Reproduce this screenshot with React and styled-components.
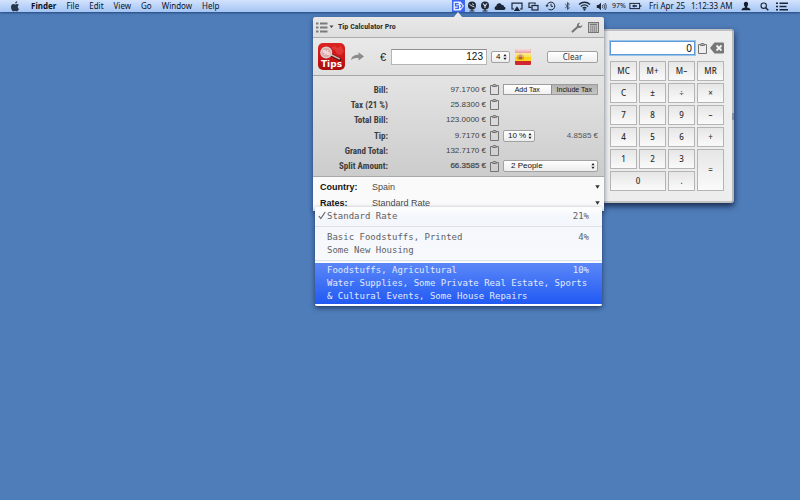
import React, { useState } from "react";
import styled, { createGlobalStyle, css } from "styled-components";

const sans = `"Liberation Sans", Arial, sans-serif`;
const narrow = `"Liberation Sans Narrow", "Roboto Condensed", "Liberation Sans", sans-serif`;
const system = `"Noto Sans", "Open Sans", sans-serif`;
const mono = `"DejaVu Sans Mono", monospace`;

const GlobalStyle = createGlobalStyle`
  *, *::before, *::after { box-sizing: border-box; }
  body { margin: 0; background: #4f7db9; }
  button, input, select { margin: 0; font: inherit; color: inherit; }
  svg { display: block; }
`;

const Desktop = styled.div`
  position: relative;
  min-height: 100vh;
  background: #4f7db9;
  font-family: ${sans};
  font-size: 9px;
  overflow: hidden;
`;

/* Menu bar */
const MenuBar = styled.header`
  display: flex;
  align-items: center;
  justify-content: space-between;
  height: 12px;
  padding: 0 9px;
  background: linear-gradient(#d3e3fc, #a4c5f4);
  box-shadow: 0 1px 2px #24477f;
  font-family: ${system};
  font-size: 8px;
  line-height: 12px;
  color: #0c131f;
`;

const Menus = styled.nav`
  display: flex;
  align-items: center;
  gap: 10px;
`;

const MenuButton = styled.button`
  padding: 0;
  border: 0;
  background: none;
  line-height: 12px;
  font-weight: ${(p) => (p.$strong ? 700 : 400)};
`;

const Tray = styled.div`
  display: grid;
  grid-template-columns: repeat(3, 13px) repeat(7, 17px) 18px 15px 48px 46px repeat(3, 18px);
  align-items: center;
`;

const TrayButton = styled.button`
  display: flex;
  align-items: center;
  justify-content: center;
  height: 12px;
  padding: 0;
  border: 0;
  background: ${(p) => (p.$active ? "#3d66ee" : "none")};
`;

const TrayText = styled.span`
  text-align: ${(p) => p.$align || "center"};
  font-size: ${(p) => (p.$small ? 7 : 8)}px;
  white-space: nowrap;
`;

/* Tip calculator window */
const TipWindow = styled.main`
  position: absolute;
  z-index: 2;
  left: 313px;
  top: 17px;
  width: 291px;
  border-radius: 3px 3px 0 0;
  background: #e5e5e5;
  box-shadow: 0 2px 5px rgba(10, 25, 60, 0.6);
`;

const Pointer = styled.svg`
  position: absolute;
  left: 139px;
  top: -5px;
`;

const TitleBar = styled.div`
  display: flex;
  align-items: center;
  height: 21px;
  padding: 0 5px 0 3px;
  border-bottom: 1px solid #acacac;
  border-radius: 3px 3px 0 0;
  background: linear-gradient(#e8e8e8, #dedede);
`;

const Title = styled.h1`
  flex: 1;
  margin: 0 0 0 4px;
  font: 700 8px/12px ${narrow};
  color: #333;
`;

const IconButton = styled.button`
  display: flex;
  padding: 0;
  border: 0;
  background: none;
  color: #777;
`;

const TitleTools = styled.div`
  display: flex;
  gap: 5px;
`;

const EntryBar = styled.form`
  display: flex;
  align-items: center;
  height: 38px;
  padding: 0 6px 0 5px;
  border-bottom: 1px solid #a5a5a5;
  background: linear-gradient(#e9e9e9, #dfdfdf);
`;

const ShareButton = styled(IconButton)`
  margin: 0 16px 0 6px;
`;

const Currency = styled.label`
  width: 11px;
  font-size: 11px;
  color: #222;
`;

const AmountInput = styled.input`
  flex: 1;
  min-width: 0;
  height: 16px;
  margin-right: 4px;
  padding: 0 3px;
  border: 1px solid #b5b5b5;
  border-top-color: #8f8f8f;
  border-radius: 0;
  background: #fff;
  text-align: right;
  font-size: 10px;
  color: #111;
`;

const ClearButton = styled.button`
  width: 51px;
  height: 12px;
  margin-left: 16px;
  padding: 0;
  border: 1px solid #9f9f9f;
  border-radius: 2px;
  background: linear-gradient(#fff, #efefef);
  font-family: ${system};
  font-size: 8px;
  line-height: 9px;
  color: #333;
`;

const Flag = styled.div`
  margin-left: 5px;
`;

const Totals = styled.div`
  display: grid;
  grid-template-rows: repeat(6, 1fr);
  height: 101px;
  padding: 6px 6px 2px 0;
  border-bottom: 1px solid #a9a9a9;
  background: linear-gradient(#e4e4e4, #cccccc);
`;

const TotalRow = styled.div`
  display: grid;
  grid-template-columns: 75px 94px 9px 1fr;
  column-gap: 4px;
  align-items: center;
`;

const TotalLabel = styled.span`
  text-align: right;
  font: 700 9px/12px ${narrow};
  color: #3d3d3d;
`;

const TotalValue = styled.output`
  text-align: right;
  white-space: nowrap;
  font-size: 8px;
  line-height: 12px;
  color: #414141;
  -webkit-text-stroke: ${(p) => (p.$strong ? "0.2px #414141" : "0")};
`;

const TotalExtra = styled.div`
  display: flex;
  align-items: center;
  justify-content: space-between;
  font-size: 8px;
  color: #555;
`;

const Segments = styled.div`
  display: grid;
  grid-template-columns: 1fr 1fr;
  width: 100%;
  height: 11px;
  border: 1px solid #9c9c9c;
`;

const Segment = styled.button`
  padding: 0;
  border: 0;
  border-left: ${(p) => (p.$on ? "1px solid #8e8e8e" : "0")};
  background: ${(p) => (p.$on ? "linear-gradient(#b4b4b4, #c4c4c4)" : "linear-gradient(#fff, #f0f0f0)")};
  font-size: 7px;
  line-height: 9px;
  color: #111;
`;

const SelectFrame = styled.span`
  display: inline-grid;
  align-items: center;
  justify-items: end;
  width: ${(p) => p.$width};
  > * { grid-area: 1 / 1; }
  > svg { margin-right: ${(p) => (p.$plain ? 0 : 3)}px; pointer-events: none; }
`;

const SelectBox = styled.select`
  appearance: none;
  width: 100%;
  height: 12px;
  padding: 0 0 0 ${(p) => p.$indent || 4}px;
  border: 1px solid #a2a2a2;
  border-radius: 2px;
  background: linear-gradient(#fff, #ececec);
  font-size: 8px;
  line-height: 10px;
  color: #111;
  ${(p) => p.$plain && css`
    padding: 0;
    border: 0;
    background: none;
    font-size: 9px;
    line-height: 12px;
    color: #4a4a4a;
  `}
`;

const Settings = styled.div`
  display: grid;
  grid-template-rows: 16px 16px;
  height: 34px;
  padding: 2px 4px 0 7px;
  background: #fafafa;
`;

const SettingRow = styled.label`
  display: grid;
  grid-template-columns: 52px 1fr;
  align-items: center;
`;

const SettingName = styled.span`
  font-weight: 700;
  line-height: 12px;
  color: #111;
`;

/* Rate menu */
const RateMenu = styled.div`
  position: absolute;
  left: 2px;
  right: 2px;
  top: 190px;
  padding: 3px 0 2px;
  border-radius: 2px;
  background: linear-gradient(#fff, #f3f6fb 10px, #f8fafd 56px, #fff 57px);
  box-shadow: 0 2px 5px rgba(10, 25, 60, 0.65);
  font-family: ${mono};
`;

const RateOption = styled.button`
  position: relative;
  display: grid;
  grid-template-columns: 1fr auto;
  width: 100%;
  padding: ${(p) => (p.$active ? "1px 13px 1px 12px" : "0 13px 0 12px")};
  border: 0;
  text-align: left;
  font-size: 9px;
  line-height: 13px;
  white-space: nowrap;
  color: ${(p) => (p.$active ? "#e2eaff" : "#606164")};
  background: ${(p) => (p.$active ? "linear-gradient(#5b87f7, #215af3)" : "none")};
`;

const RateDetail = styled.span`
  grid-column: 1 / -1;
`;

const Rule = styled.hr`
  margin: ${(p) => (p.$tight ? "3px 0 2px" : "3px 0 4px")};
  border: 0;
  border-top: 1px solid #dde1e7;
`;

const Check = styled.svg`
  position: absolute;
  left: 3px;
  top: 1px;
`;

/* Keypad window */
const Keypad = styled.aside`
  position: absolute;
  z-index: 1;
  left: 601px;
  top: 29px;
  width: 133px;
  padding: 10px 8px 10px 8px;
  border: 1px solid #a9a9a9;
  border-top: 2px solid #bcbfc4;
  border-right: 2px solid #b9b9b9;
  border-bottom: 2px solid #c2c2c2;
  border-radius: 3px;
  background: #ededed;
  box-shadow: 0 3px 6px rgba(5, 15, 45, 0.8);
`;

const Grip = styled.span`
  position: absolute;
  right: -2px;
  top: 82px;
  width: 2px;
  height: 7px;
  background: #8b8f96;
`;

const Display = styled.div`
  display: flex;
  align-items: center;
  gap: 3px;
  margin-bottom: 6px;
`;

const DisplayInput = styled.input`
  flex: 1;
  min-width: 0;
  height: 14px;
  padding: 0 2px;
  border: 1px solid #5d9bd8;
  border-radius: 0;
  outline: 1px solid #9cc3ea;
  background: #fff;
  text-align: right;
  font-family: ${system};
  font-size: 10px;
  color: #111;
`;

const Keys = styled.div`
  display: grid;
  grid-template-columns: repeat(4, 1fr);
  grid-auto-rows: 20px;
  gap: 2px;
`;

const Key = styled.button`
  grid-column: span ${(p) => p.$cols || 1};
  grid-row: span ${(p) => p.$rows || 1};
  padding: 0;
  border: 1px solid #b4b4b4;
  background: linear-gradient(#e6e6e6, #fafafa);
  font-family: ${system};
  font-size: 8px;
  font-weight: 500;
  line-height: 12px;
  color: #2b2b2b;
`;

const Clipboard = () => (
  <svg width="9" height="11" viewBox="0 0 9 11" fill="none" stroke="#747474">
    <path d="M2.500 1.500h-2v9h8v-9h-2" />
    <path d="M2.500 2.500h4v-1.300L5.400.5H3.600l-1.100.7z" fill="#aaa" />
  </svg>
);

const Updown = () => (
  <svg width="4" height="6" viewBox="0 0 4 6" fill="#222">
    <path d="M2 0l1.600 2.200H.4zM2 6L.4 3.800h3.200z" />
  </svg>
);

const Caret = ({ color = "#333" }) => (
  <svg width="5" height="4" viewBox="0 0 5 4" fill={color}>
    <path d="M.3.3h4.400L2.500 3.700z" />
  </svg>
);

const AppleLogo = () => (
  <svg width="12" height="11" viewBox="0 0 12 11" fill="#26364b">
    <path d="M8.200.2c.1 1.300-.9 2.300-2.100 2.300C6 1.400 7 .3 8.200.2zM9.900 7.900c-.5 1.300-1.300 2.500-2.200 2.500-.6 0-.8-.4-1.600-.4s-1 .4-1.600.4C3.200 10.400 2 8 2 6 2 4.100 3.200 3 4.400 3c.7 0 1.200.4 1.800.4S7.300 2.900 8.200 2.900c.6 0 1.200.3 1.600.8-1.500.9-1.300 3.300.1 4.200z" />
  </svg>
);

const TrayIcons = {
  tips: (
    <svg width="13" height="12" viewBox="0 0 13 12">
      <path d="M1.500 1.500h7L12 6l-3.500 4.500h-7z" fill="#e8efff" />
      <path d="M6.600 3.600H3.500v2.300h2.900v2.500H3.200M8.400 4l1.600 2-1.600 2" fill="none" stroke="#3d66ee" strokeWidth="1.200" />
    </svg>
  ),
  disc: (
    <svg width="10" height="11" viewBox="0 0 10 11">
      <circle cx="5" cy="4.500" r="4" fill="#202938" />
      <path d="M2.500 3.500L5 5l2.500 1M5 2.500L7 4" stroke="#dce8fc" strokeWidth=".9" />
      <path d="M2.500 10h5M5 8v2" stroke="#202938" strokeWidth="1.200" />
    </svg>
  ),
  vee: (
    <svg width="10" height="11" viewBox="0 0 10 11">
      <circle cx="5" cy="4.500" r="4" fill="#202938" />
      <path d="M3 2.500l2 2.300 2-2.300M5 4.500V7" fill="none" stroke="#dce8fc" strokeWidth="1.100" />
      <path d="M2.500 10h5M5 8v2" stroke="#202938" strokeWidth="1.200" />
    </svg>
  ),
  cloud: (
    <svg width="12" height="9" viewBox="0 0 12 9" fill="#1b2738">
      <path d="M2.700 8C-.2 8 .1 4.400 2.300 4.300 2.500 1 6.700.1 7.800 3c1.600-.3 2.300.8 2.200 1.700C12.200 5 11.900 8 9.800 8z" />
    </svg>
  ),
  airplay: (
    <svg width="12" height="9" viewBox="0 0 12 9">
      <path d="M3 7H1V1.200h10V7H9" fill="none" stroke="#1b2738" strokeWidth="1.200" />
      <path d="M6 4.200L9.200 9H2.800z" fill="#1b2738" />
    </svg>
  ),
  windows: (
    <svg width="11" height="9" viewBox="0 0 11 9" fill="none" stroke="#1b2738" strokeWidth="1.200">
      <path d="M3.500 5.400H1V1h6v1.500" />
      <rect x="4" y="3.500" width="6" height="4.500" />
    </svg>
  ),
  clock: (
    <svg width="11" height="10" viewBox="0 0 11 10" fill="none" stroke="#1b2738">
      <path d="M2 5a3.900 3.900 0 1 1 1.500 3.100M6 2.700V5.300h2" />
      <path d="M.3 4.200h3.400L2 6.300z" fill="#1b2738" stroke="none" />
    </svg>
  ),
  bluetooth: (
    <svg width="7" height="10" viewBox="0 0 7 10" fill="none" stroke="#33445c" strokeWidth=".9">
      <path d="M1.200 3l4.200 3.800L3.500 8.600V1.400l1.900 1.800L1.200 7" />
    </svg>
  ),
  wifi: (
    <svg width="13" height="10" viewBox="0 0 13 10" fill="none" stroke="#1b2738" strokeWidth="1.300">
      <path d="M1 3.500c3.200-3 7.800-3 11 0M2.800 5.500c2.200-2 5.200-2 7.400 0M4.600 7.300c1.200-1 2.600-1 3.800 0" />
      <circle cx="6.500" cy="8.600" r=".5" />
    </svg>
  ),
  volume: (
    <svg width="11" height="9" viewBox="0 0 11 9">
      <path d="M.8 3h1.700L5 .8v7.400L2.500 6H.8z" fill="#1b2738" />
      <path d="M6.300 3c.7.900.7 2.100 0 3M7.700 2c1.200 1.500 1.200 3.500 0 5M9 1c1.700 2 1.700 5 0 7" fill="none" stroke="#1b2738" strokeWidth=".8" />
    </svg>
  ),
  battery: (
    <svg width="13" height="8" viewBox="0 0 13 8">
      <rect x=".9" y="1.400" width="9.700" height="5.200" fill="none" stroke="#1b2738" />
      <path d="M11.300 3h1v2h-1zM3 4l2.500-1.700v1H8v1.400H5.500v1z" fill="#1b2738" />
    </svg>
  ),
  user: (
    <svg width="10" height="10" viewBox="0 0 10 10" fill="#141d2b">
      <path d="M5 .8c3 0 2.300 3.900 1 4.900v.9c1.500.5 3.500.8 3.500 2.600h-9C.5 7.400 2.500 7.100 4 6.600v-.9C2.700 4.700 2 .8 5 .8z" />
    </svg>
  ),
  search: (
    <svg width="9" height="9" viewBox="0 0 9 9" fill="none" stroke="#1b2738">
      <circle cx="3.700" cy="3.700" r="2.700" strokeWidth="1.100" />
      <path d="M5.700 5.700l2.600 2.600" strokeWidth="1.500" />
    </svg>
  ),
  list: (
    <svg width="12" height="9" viewBox="0 0 12 9" stroke="#1b2738" strokeWidth="1.600">
      <path d="M0 1.200h2M0 4.500h2M0 7.800h2M3.500 1.200H12M3.500 4.500h7M3.500 7.800H12" />
    </svg>
  ),
};

const TrayIcon = ({ name, label, active }) => (
  <TrayButton aria-label={label} $active={active}>{TrayIcons[name]}</TrayButton>
);

const TipsLogo = () => (
  <svg width="27" height="27" viewBox="0 0 27 27" role="img" aria-label="Tips">
    <defs>
      <linearGradient id="red" x1="0" y1="0" x2="0" y2="1">
        <stop offset="0" stopColor="#dc2323" />
        <stop offset=".6" stopColor="#c81414" />
        <stop offset="1" stopColor="#a80d0d" />
      </linearGradient>
    </defs>
    <rect width="27" height="27" rx="5" fill="url(#red)" />
    <path d="M13 5l4-2 2 2 4-2 3 5-3 4-4-1-2-4z" fill="#ea4848" opacity=".6" />
    <path d="M13 12.200l8.800 4.300" stroke="#501414" strokeWidth="3" strokeLinecap="round" />
    <path d="M12.500 11.500l9 4.300" stroke="#d6b5b2" strokeWidth="1.400" strokeLinecap="round" />
    <circle cx="8.200" cy="9.500" r="5.300" fill="#dba9a5" stroke="#d9cecd" strokeWidth="1.500" />
    <text x="8.200" y="12.300" textAnchor="middle" fontFamily="Liberation Sans" fontSize="8" fontWeight="700" fill="#fff4f2">%</text>
    <text x="13.500" y="24" textAnchor="middle" fontFamily="DejaVu Sans" fontSize="9" fontWeight="700" fill="#fff">Tips</text>
  </svg>
);

const SpainFlag = () => (
  <svg width="16" height="16" viewBox="0 0 16 16" role="img" aria-label="Spain">
    <defs>
      <linearGradient id="gloss" x1="0" y1="0" x2="0" y2="1">
        <stop offset="0" stopColor="#fff" stopOpacity=".85" />
        <stop offset=".5" stopColor="#fff" stopOpacity=".25" />
        <stop offset=".52" stopColor="#fff" stopOpacity="0" />
      </linearGradient>
    </defs>
    <rect width="16" height="16" rx="1" fill="#cf2630" />
    <rect y="4" width="16" height="8" fill="#f9d51c" />
    <rect x="3.500" y="5.500" width="4" height="5" rx="1" fill="#b3632e" />
    <path d="M2.800 6v4.500M8.200 6v4.500M4.500 5h2" stroke="#d28a35" />
    <rect width="16" height="16" rx="1" fill="url(#gloss)" />
  </svg>
);

const rows = [
  { label: "Bill:", value: "97.1700 €", extra: "tax" },
  { label: "Tax (21 %)", value: "25.8300 €" },
  { label: "Total Bill:", value: "123.0000 €" },
  { label: "Tip:", value: "9.7170 €", extra: "tip" },
  { label: "Grand Total:", value: "132.7170 €" },
  { label: "Split Amount:", value: "66.3585 €", extra: "split", strong: true },
];

const keys = [
  ["MC"], ["M+"], ["M–"], ["MR"],
  ["C"], ["±"], ["÷"], ["×"],
  ["7"], ["8"], ["9"], ["–"],
  ["4"], ["5"], ["6"], ["+"],
  ["1"], ["2"], ["3"], ["=", 1, 2],
  ["0", 2], ["."],
];

function TaxMode() {
  const [included, setIncluded] = useState(true);
  return (
    <Segments>
      <Segment type="button" $on={!included} onClick={() => setIncluded(false)}>Add Tax</Segment>
      <Segment type="button" $on={included} onClick={() => setIncluded(true)}>Include Tax</Segment>
    </Segments>
  );
}

function Picker({ label, value, width, plain, indent }) {
  return (
    <SelectFrame $width={width} $plain={plain}>
      <SelectBox aria-label={label} $plain={plain} $indent={indent}>
        <option>{value}</option>
      </SelectBox>
      {plain ? <Caret /> : <Updown />}
    </SelectFrame>
  );
}

const extras = {
  tax: <TaxMode />,
  tip: (
    <>
      <Picker label="Tip percentage" value="10 %" width="32px" />
      <span>4.8585 €</span>
    </>
  ),
  split: <Picker label="People" value="2 People" width="100%" indent={7} />,
};

export default function App() {
  const [amount, setAmount] = useState("123");
  const [display, setDisplay] = useState("0");

  return (
    <Desktop>
      <GlobalStyle />
      <MenuBar>
        <Menus>
          <MenuButton aria-label="Apple"><AppleLogo /></MenuButton>
          <MenuButton $strong>Finder</MenuButton>
          {["File", "Edit", "View", "Go", "Window", "Help"].map((m) => (
            <MenuButton key={m}>{m}</MenuButton>
          ))}
        </Menus>
        <Tray>
          <TrayIcon name="tips" label="Tip Calculator" active />
          <TrayIcon name="disc" label="Currency" />
          <TrayIcon name="vee" label="VAT" />
          <TrayIcon name="cloud" label="Cloud" />
          <TrayIcon name="airplay" label="AirPlay" />
          <TrayIcon name="windows" label="Displays" />
          <TrayIcon name="clock" label="Time Machine" />
          <TrayIcon name="bluetooth" label="Bluetooth" />
          <TrayIcon name="wifi" label="Wi-Fi" />
          <TrayIcon name="volume" label="Volume" />
          <TrayText $small>97%</TrayText>
          <TrayIcon name="battery" label="Battery" />
          <TrayText>Fri Apr 25</TrayText>
          <TrayText $align="left">1:12:33 AM</TrayText>
          <TrayIcon name="user" label="User" />
          <TrayIcon name="search" label="Search" />
          <TrayIcon name="list" label="Notifications" />
        </Tray>
      </MenuBar>

      <TipWindow>
        <Pointer width="12" height="6" viewBox="0 0 12 6"><path d="M6 0l5 6H1z" fill="#e8e8e8" /></Pointer>
        <TitleBar>
          <IconButton aria-label="Menu">
            <svg width="18" height="11" viewBox="0 0 18 11">
              <path d="M0 1.500h2.500M0 5.500h2.500M0 9.500h2.500M4 1.500h7.500M4 5.500h7.500M4 9.500h7.500" stroke="#7b7b7b" strokeWidth="2.200" />
              <path d="M13.500 3.500h4L15.500 6z" fill="#444" />
            </svg>
          </IconButton>
          <Title>Tip Calculator Pro</Title>
          <TitleTools>
            <IconButton aria-label="Settings">
              <svg width="12" height="11" viewBox="0 0 12 11">
                <path d="M1.600 9.600l5-4.700" stroke="#757575" strokeWidth="2" strokeLinecap="round" />
                <path d="M11.300 2.800c.3 2.200-1.900 3.700-3.900 2.900L5.900 4.200C5.600 2 7.300.3 9.300.8L7.700 2.400l.4 1.400 1.500.4z" fill="#757575" />
              </svg>
            </IconButton>
            <IconButton aria-label="Calculator">
              <svg width="11" height="11" viewBox="0 0 11 11">
                <rect x=".5" y=".5" width="10" height="10" fill="#c8c8c8" stroke="#777" />
                <path d="M2 2.500h7" stroke="#777" strokeWidth="1.500" />
                <path d="M2 5h7M2 7h7M2 9h7" stroke="#666" strokeWidth="1.200" strokeDasharray="1.300 .6" />
              </svg>
            </IconButton>
          </TitleTools>
        </TitleBar>

        <EntryBar onSubmit={(e) => e.preventDefault()}>
          <TipsLogo />
          <ShareButton type="button" aria-label="Share">
            <svg width="13" height="9" viewBox="0 0 13 9" fill="#8c8c8c">
              <path d="M0 8c.8-4 3.800-5.300 7.600-5.200V.3L13 4.500 7.600 8.500V6C4.500 5.600 2 6.200 0 8z" />
            </svg>
          </ShareButton>
          <Currency htmlFor="amount">€</Currency>
          <AmountInput id="amount" value={amount} onChange={(e) => setAmount(e.target.value)} />
          <Picker label="Decimals" value="4" width="19px" indent={4} />
          <Flag><SpainFlag /></Flag>
          <ClearButton type="button" onClick={() => setAmount("")}>Clear</ClearButton>
        </EntryBar>

        <Totals>
          {rows.map((r) => (
            <TotalRow key={r.label}>
              <TotalLabel>{r.label}</TotalLabel>
              <TotalValue $strong={r.strong}>{r.value}</TotalValue>
              <IconButton aria-label={`Copy ${r.label}`}><Clipboard /></IconButton>
              <TotalExtra>{extras[r.extra]}</TotalExtra>
            </TotalRow>
          ))}
        </Totals>

        <Settings>
          <SettingRow>
            <SettingName>Country:</SettingName>
            <Picker label="Country" value="Spain" width="100%" plain />
          </SettingRow>
          <SettingRow>
            <SettingName>Rates:</SettingName>
            <Picker label="Rates" value="Standard Rate" width="100%" plain />
          </SettingRow>
        </Settings>

        <RateMenu role="listbox" aria-label="Rates">
          <RateOption role="option" aria-selected="true">
            <Check width="8" height="9" viewBox="0 0 8 9"><path d="M.8 5l2 2.500L7.200 1" fill="none" stroke="#666" strokeWidth="1.200" /></Check>
            <span>Standard Rate</span>
            <span>21%</span>
          </RateOption>
          <Rule />
          <RateOption role="option" aria-selected="false">
            <span>Basic Foodstuffs, Printed</span>
            <span>4%</span>
            <RateDetail>Some New Housing</RateDetail>
          </RateOption>
          <Rule $tight />
          <RateOption role="option" aria-selected="false" $active>
            <span>Foodstuffs, Agricultural</span>
            <span>10%</span>
            <RateDetail>Water Supplies, Some Private Real Estate, Sports</RateDetail>
            <RateDetail>&amp; Cultural Events, Some House Repairs</RateDetail>
          </RateOption>
        </RateMenu>
      </TipWindow>

      <Keypad aria-label="Calculator">
        <Grip />
        <Display>
          <DisplayInput aria-label="Result" value={display} onChange={(e) => setDisplay(e.target.value)} />
          <IconButton aria-label="Copy result"><Clipboard /></IconButton>
          <IconButton aria-label="Delete" onClick={() => setDisplay("0")}>
            <svg width="14" height="12" viewBox="0 0 14 12">
              <path d="M0 6l4.500-5.500H13a1 1 0 0 1 1 1v9a1 1 0 0 1-1 1H4.500z" fill="#777" />
              <path d="M6.500 3.500l5 5M11.500 3.500l-5 5" stroke="#f5f5f5" strokeWidth="1.800" />
            </svg>
          </IconButton>
        </Display>
        <Keys>
          {keys.map(([k, cols, span], i) => (
            <Key key={i} $cols={cols} $rows={span} onClick={() => /\d/.test(k) && setDisplay(k)}>{k}</Key>
          ))}
        </Keys>
      </Keypad>
    </Desktop>
  );
}
